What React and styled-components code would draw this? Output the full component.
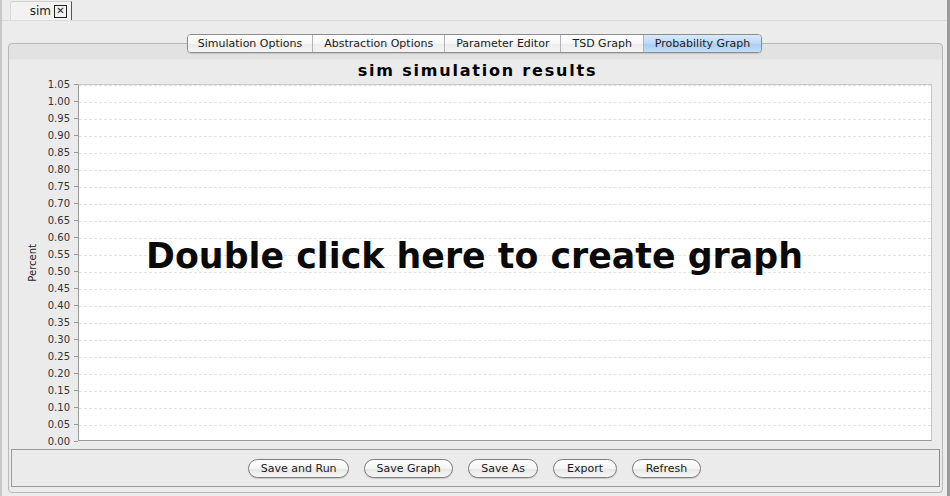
import React from 'react';
import styled, { createGlobalStyle } from 'styled-components';

const GlobalStyle = createGlobalStyle`
  html, body {
    margin: 0;
    padding: 0;
    background: #ececec;
  }
  body {
    font-family: "DejaVu Sans", "Liberation Sans", sans-serif;
    color: #000;
  }
`;

const Window = styled.div`
  width: 950px;
  height: 496px;
  box-sizing: border-box;
  background: #ececec;
  border-left: 2px solid #c8c8c8;
  border-right: 3px solid #9a9a9a;
  display: flex;
  flex-direction: column;
`;

const DocTabStrip = styled.div`
  height: 23px;
  display: flex;
  align-items: flex-end;
  padding-left: 8px;
  border-bottom: 1px solid #dcdcdc;
  box-sizing: border-box;
`;

const DocTab = styled.div`
  height: 19px;
  width: 62px;
  box-sizing: border-box;
  display: flex;
  align-items: center;
  justify-content: flex-end;
  gap: 3px;
  padding-right: 4px;
  background: #f2f2f2;
  border-top: 1px solid #d0d0d0;
  border-left: 1px solid #d8d8d8;
  border-right: 1px solid #555;
  border-top-left-radius: 3px;
  font-size: 12px;
  color: #222;
`;

const CloseBox = styled.span`
  width: 11px;
  height: 11px;
  border: 1px solid #222;
  font-size: 10px;
  line-height: 10px;
  text-align: center;
  font-weight: bold;
`;

const Body = styled.div`
  flex: 1;
  display: flex;
  flex-direction: column;
  padding: 13px 4px 3px 6px;
`;

const TabRow = styled.div`
  display: flex;
  justify-content: center;
  margin-bottom: -10px;
  position: relative;
  z-index: 1;
  padding-right: 2px;
`;

const TabGroup = styled.div`
  display: flex;
  height: 19px;
  box-sizing: border-box;
  border: 1px solid #8c8c8c;
  border-radius: 4px;
  overflow: hidden;
  box-shadow: 0 1px 1px rgba(0, 0, 0, 0.12);
`;

const Tab = styled.div`
  display: flex;
  align-items: center;
  padding: 0 ${p => p.$pad}px;
  font-size: 11px;
  color: #1a1a1a;
  background: ${p => p.$active
    ? 'linear-gradient(#d9eafc, #bcd8f6 50%, #a9cdf4 51%, #c3def9)'
    : 'linear-gradient(#ffffff, #f6f6f6 50%, #ececec 51%, #f4f4f4)'};
  & + & {
    border-left: 1px solid #b4b4b4;
  }
`;

const Pane = styled.div`
  flex: 1;
  display: flex;
  flex-direction: column;
  border: 1px solid #b8b8b8;
  border-radius: 4px;
  background: linear-gradient(#e2e2e2 0, #e2e2e2 15px, #ebebeb 16px);
  padding: 0 2px 5px 2px;
`;

const ChartArea = styled.div`
  position: relative;
  display: flex;
  flex-direction: column;
  padding: 14px 8px 0 0;
`;

const ChartTitle = styled.div`
  text-align: center;
  font-size: 16px;
  font-weight: bold;
  letter-spacing: 1.8px;
  height: 26px;
  line-height: 26px;
  padding-left: 12px;
`;

const PlotRow = styled.div`
  display: grid;
  grid-template-columns: 30px 30px 7px 1fr;
  grid-template-rows: 357px;
`;

const AxisName = styled.div`
  display: flex;
  align-items: center;
  justify-content: flex-end;
  padding-right: 3px;
  span {
    writing-mode: vertical-rl;
    transform: rotate(180deg);
    font-size: 10px;
    color: #222;
  }
`;

const TickLabels = styled.div`
  display: flex;
  flex-direction: column;
`;

const TickLabel = styled.div`
  flex: none;
  height: 17px;
  margin-top: ${p => (p.$first ? '-8px' : '0')};
  line-height: 17px;
  font-size: 10px;
  text-align: right;
  color: #333;
  padding-right: 1px;
`;

const Ticks = styled.div`
  display: flex;
  flex-direction: column;
`;

const Tick = styled.div`
  flex: none;
  height: 17px;
  box-sizing: border-box;
  border-top: 1px solid #999;
  margin-left: 3px;
  &:last-child {
    height: 0;
  }
`;

const Plot = styled.div`
  height: 357px;
  box-sizing: border-box;
  background: #fff;
  border-left: 1px solid #9a9a9a;
  border-bottom: 1px solid #9a9a9a;
  border-top: 1px solid #c8c8c8;
  border-right: 1px solid #c8c8c8;
  display: flex;
  flex-direction: column;
`;

const GridLine = styled.div`
  flex: none;
  height: 17px;
  box-sizing: border-box;
  border-top: 1px dashed #e2e2e2;
`;

const Hint = styled.div`
  position: absolute;
  left: 0;
  right: 0;
  top: 192px;
  text-align: center;
  font-size: 34.8px;
  font-weight: bold;
  color: #0a0a0a;
  padding-right: 2px;
`;

const ButtonBar = styled.div`
  margin-top: 8px;
  height: 38px;
  box-sizing: border-box;
  border: 1px solid #9a9a9a;
  border-right-color: #8a8a8a;
  display: flex;
  justify-content: center;
  align-items: center;
  gap: 15px;
  padding-right: 2px;
`;

const Button = styled.button`
  height: 19px;
  padding: 0 ${p => p.$pad}px;
  border: 1px solid #7d7d7d;
  border-radius: 10px;
  background: linear-gradient(#ffffff, #f4f4f4 50%, #e6e6e6 51%, #f7f7f7);
  box-shadow: 0 1px 1px rgba(0, 0, 0, 0.15);
  font-family: "DejaVu Sans", "Liberation Sans", sans-serif;
  font-size: 11px;
  color: #1a1a1a;
`;

const tabs = [
  { label: 'Simulation Options', pad: 10 },
  { label: 'Abstraction Options', pad: 11 },
  { label: 'Parameter Editor', pad: 11 },
  { label: 'TSD Graph', pad: 11 },
  { label: 'Probability Graph', pad: 11, active: true },
];

const ticks = Array.from({ length: 22 }, (_, i) => ((21 - i) * 0.05).toFixed(2));

const buttons = [
  { label: 'Save and Run', pad: 11.5 },
  { label: 'Save Graph', pad: 11.5 },
  { label: 'Save As', pad: 12 },
  { label: 'Export', pad: 13 },
  { label: 'Refresh', pad: 12.5 },
];

export default function App() {
  return (
    <>
      <GlobalStyle />
      <Window>
        <DocTabStrip>
          <DocTab>
            sim <CloseBox>✕</CloseBox>
          </DocTab>
        </DocTabStrip>
        <Body>
          <TabRow>
            <TabGroup>
              {tabs.map(t => (
                <Tab key={t.label} $pad={t.pad} $active={t.active}>{t.label}</Tab>
              ))}
            </TabGroup>
          </TabRow>
          <Pane>
            <ChartArea>
              <ChartTitle>sim simulation results</ChartTitle>
              <PlotRow>
                <AxisName><span>Percent</span></AxisName>
                <TickLabels>
                  {ticks.map((t, i) => (
                    <TickLabel key={t} $first={i === 0}>{t}</TickLabel>
                  ))}
                </TickLabels>
                <Ticks>
                  {ticks.map(t => <Tick key={t} />)}
                </Ticks>
                <Plot>
                  {ticks.slice(1).map(t => <GridLine key={t} />)}
                </Plot>
              </PlotRow>
              <Hint>Double click here to create graph</Hint>
            </ChartArea>
            <ButtonBar>
              {buttons.map(b => (
                <Button key={b.label} $pad={b.pad}>{b.label}</Button>
              ))}
            </ButtonBar>
          </Pane>
        </Body>
      </Window>
    </>
  );
}
